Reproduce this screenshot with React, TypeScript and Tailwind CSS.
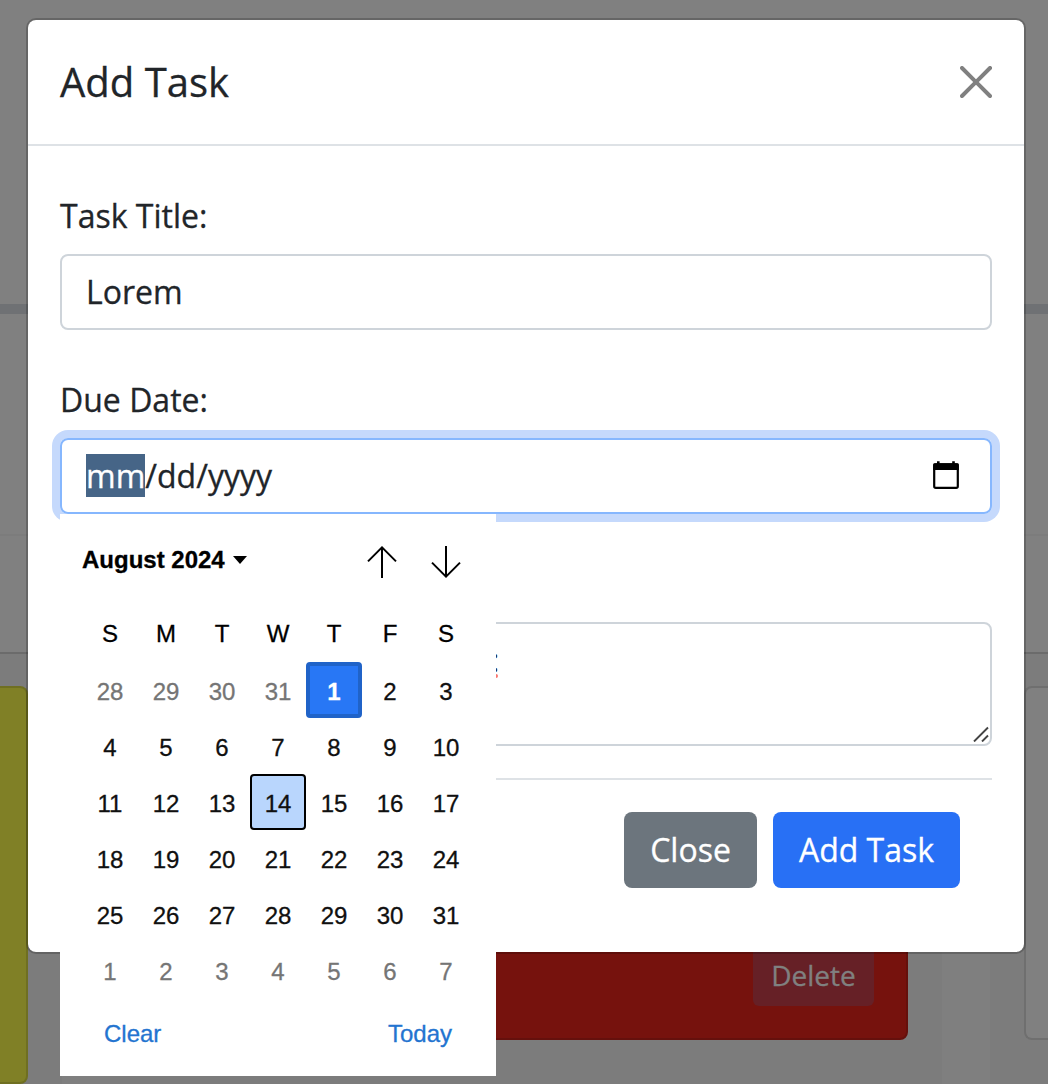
import React from "react";

const weekdays = ["S", "M", "T", "W", "T", "F", "S"];

type Day = { n: number; muted: boolean };

const days: Day[] = [
  ...[28, 29, 30, 31].map((n) => ({ n, muted: true })),
  ...Array.from({ length: 31 }, (_, i) => ({ n: i + 1, muted: false })),
  ...[1, 2, 3, 4, 5, 6, 7].map((n) => ({ n, muted: true })),
];

function dayClass(day: Day) {
  if (day.muted) return "flex h-14 items-center justify-center pt-[3px] text-[#757575]";
  if (day.n === 1)
    return "flex h-14 items-center justify-center rounded-[4px] border-4 border-[#2063c8] bg-[#2877f5] pt-[3px] font-bold text-white";
  if (day.n === 14)
    return "flex h-14 items-center justify-center rounded-[4px] border-2 border-black bg-[#b9d6fd] pt-[3px] text-[#101010]";
  return "flex h-14 items-center justify-center pt-[3px] text-[#101010]";
}

function Backdrop() {
  return (
    <div className="flex h-[1084px] w-[1048px] flex-col overflow-hidden bg-[#808080]">
      <div className="h-[304px] shrink-0" />
      <div className="h-2.5 shrink-0 bg-[#6f7174]" />
      <div className="h-[220px] shrink-0" />
      <div className="h-[120px] shrink-0 border-t-2 border-b-2 border-t-[#7c7c7c] border-b-[#6b6b6b]" />
      <div className="flex h-[430px] shrink-0 gap-12 bg-[#7f7f7f]">
        <div className="w-[62px] bg-[#7c7c7c] pt-8 pr-[34px]">
          <div className="h-[398px] rounded-r-[8px] border-2 border-l-0 border-[#6f6f21] bg-[#808026]" />
        </div>
        <div className="w-[832px] bg-[#7c7c7c] px-[34px] pt-8">
          <div className="flex h-[354px] items-end justify-end rounded-[8px] border-2 border-[#65100c] bg-[#76120d] pr-8 pb-8">
            <div className="flex h-[62px] w-[121px] items-center justify-center rounded-[6px] bg-[#662026] text-[28px] text-[#808080]">
              Delete
            </div>
          </div>
        </div>
        <div className="w-[58px] bg-[#7c7c7c] pt-8 pl-[34px]">
          <div className="h-[354px] rounded-l-[8px] border-2 border-r-0 border-[#6f6f6f] bg-[#808080]" />
        </div>
      </div>
    </div>
  );
}

function CalendarIcon() {
  return (
    <svg className="mb-[2px] h-[30px] w-[28px]" viewBox="0 0 28 30">
      <rect x="2.2" y="4.300" width="23.600" height="23.600" rx="1.600" fill="none" stroke="#000" strokeWidth="2.200" />
      <path d="M2.500 3.300h23a1.300 1.300 0 0 1 1.300 1.300V10H1.200V4.600a1.300 1.300 0 0 1 1.300-1.300zM5 1.200h2.600v4H5zM20.200 1.200h2.600v4h-2.600z" />
    </svg>
  );
}

function DatePicker() {
  return (
    <div className="absolute top-[514px] left-[60px] flex h-[562px] w-[436px] flex-col bg-white px-[22px] font-['Liberation_Sans',Arial,sans-serif] text-2xl text-black">
      <div className="flex h-[92px] shrink-0 items-center">
        <span className="font-bold">August 2024</span>
        <svg className="ml-2 h-[8px] w-[14px]" viewBox="0 0 14 8">
          <path d="M0 0h14L7 8z" />
        </svg>
        <svg className="mt-1 ml-[120px] h-8 w-[30px]" viewBox="0 0 30 32" fill="none" stroke="#000" strokeWidth="2">
          <path d="M15 32V1.4M1 15.4l14-14 14 14" />
        </svg>
        <svg className="mt-1 ml-[34px] h-8 w-[30px]" viewBox="0 0 30 32" fill="none" stroke="#000" strokeWidth="2">
          <path d="M15 0v30.600M1 16.600l14 14 14-14" />
        </svg>
      </div>
      <div className="grid h-14 w-[392px] shrink-0 grid-cols-7">
        {weekdays.map((d, i) => (
          <div key={i} className="flex items-center justify-center">
            {d}
          </div>
        ))}
      </div>
      <div className="grid w-[392px] shrink-0 grid-cols-7">
        {days.map((day, i) => (
          <div key={i} className={dayClass(day)}>
            {day.n}
          </div>
        ))}
      </div>
      <div className="flex h-[72px] items-center justify-between px-[22px] text-[#2374d0]">
        <span>Clear</span>
        <span>Today</span>
      </div>
    </div>
  );
}

function Modal() {
  return (
    <div className="absolute top-[18px] left-[26px] flex h-[936px] w-[1000px] flex-col rounded-[10px] border-2 border-black/20 bg-white bg-clip-padding text-[32px] leading-[48px] text-[#212529]">
      <div className="flex h-[126px] shrink-0 items-center justify-between border-b-2 border-[#dee2e6] pr-8 pl-8">
        <h1 className="text-[40px] leading-[60px]">Add Task</h1>
        <svg className="h-8 w-8" viewBox="0 0 16 16" fill="#808080">
          <path d="M.293.293a1 1 0 0 1 1.414 0L8 6.586 14.293.293a1 1 0 1 1 1.414 1.414L9.414 8l6.293 6.293a1 1 0 0 1-1.414 1.414L8 9.414l-6.293 6.293a1 1 0 0 1-1.414-1.414L6.586 8 .293 1.707a1 1 0 0 1 0-1.414z" />
        </svg>
      </div>
      <div className="flex flex-col px-8 pt-[46px]">
        <label>Task Title:</label>
        <div className="mt-[14px] flex h-[76px] items-center rounded-[8px] border-2 border-[#ced4da] px-6">Lorem</div>
        <label className="mt-[46px]">Due Date:</label>
        <div className="mt-[14px] flex h-[76px] items-center justify-between rounded-[8px] border-2 border-[#86b7fe] pr-[30px] pl-6 shadow-[0_0_0_8px_#c5d9fc]">
          <span className="flex items-center">
            <span className="mb-[1px] h-[43px] bg-[#466587] leading-[43px] text-white">mm</span>
            <span>/dd/yyyy</span>
          </span>
          <CalendarIcon />
        </div>
        <div className="mt-[108px] flex h-[124px] items-end justify-between rounded-[8px] border-2 border-[#ced4da]">
          <div className="flex h-[108px] flex-col items-end pl-[429px]">
            <span className="[-webkit-text-stroke:0px]">:</span>
            <span className="-mt-[10px] mr-[1px] h-1 w-[5px] rounded-full bg-[#f9766f]" />
          </div>
          <svg className="mr-[1px] mb-[2px] h-4 w-4" viewBox="0 0 16 16" stroke="#444" strokeWidth="1.900">
            <path d="M1 15.500L15 1.500M9 15.500l6-6" />
          </svg>
        </div>
        <div className="mt-8 flex h-[110px] items-end justify-end gap-4 border-t-2 border-[#dee2e6] pr-8 text-white">
          <button className="h-[76px] w-[133px] rounded-[8px] bg-[#6c757d]">Close</button>
          <button className="h-[76px] w-[187px] rounded-[8px] bg-[#2870f5]">Add Task</button>
        </div>
      </div>
    </div>
  );
}

export default function App() {
  return (
    <div className="relative h-[1084px] w-[1048px] overflow-hidden font-['Open_Sans','Noto_Sans',sans-serif] antialiased [-webkit-text-stroke:0.3px]">
      <Backdrop />
      <Modal />
      <DatePicker />
    </div>
  );
}
